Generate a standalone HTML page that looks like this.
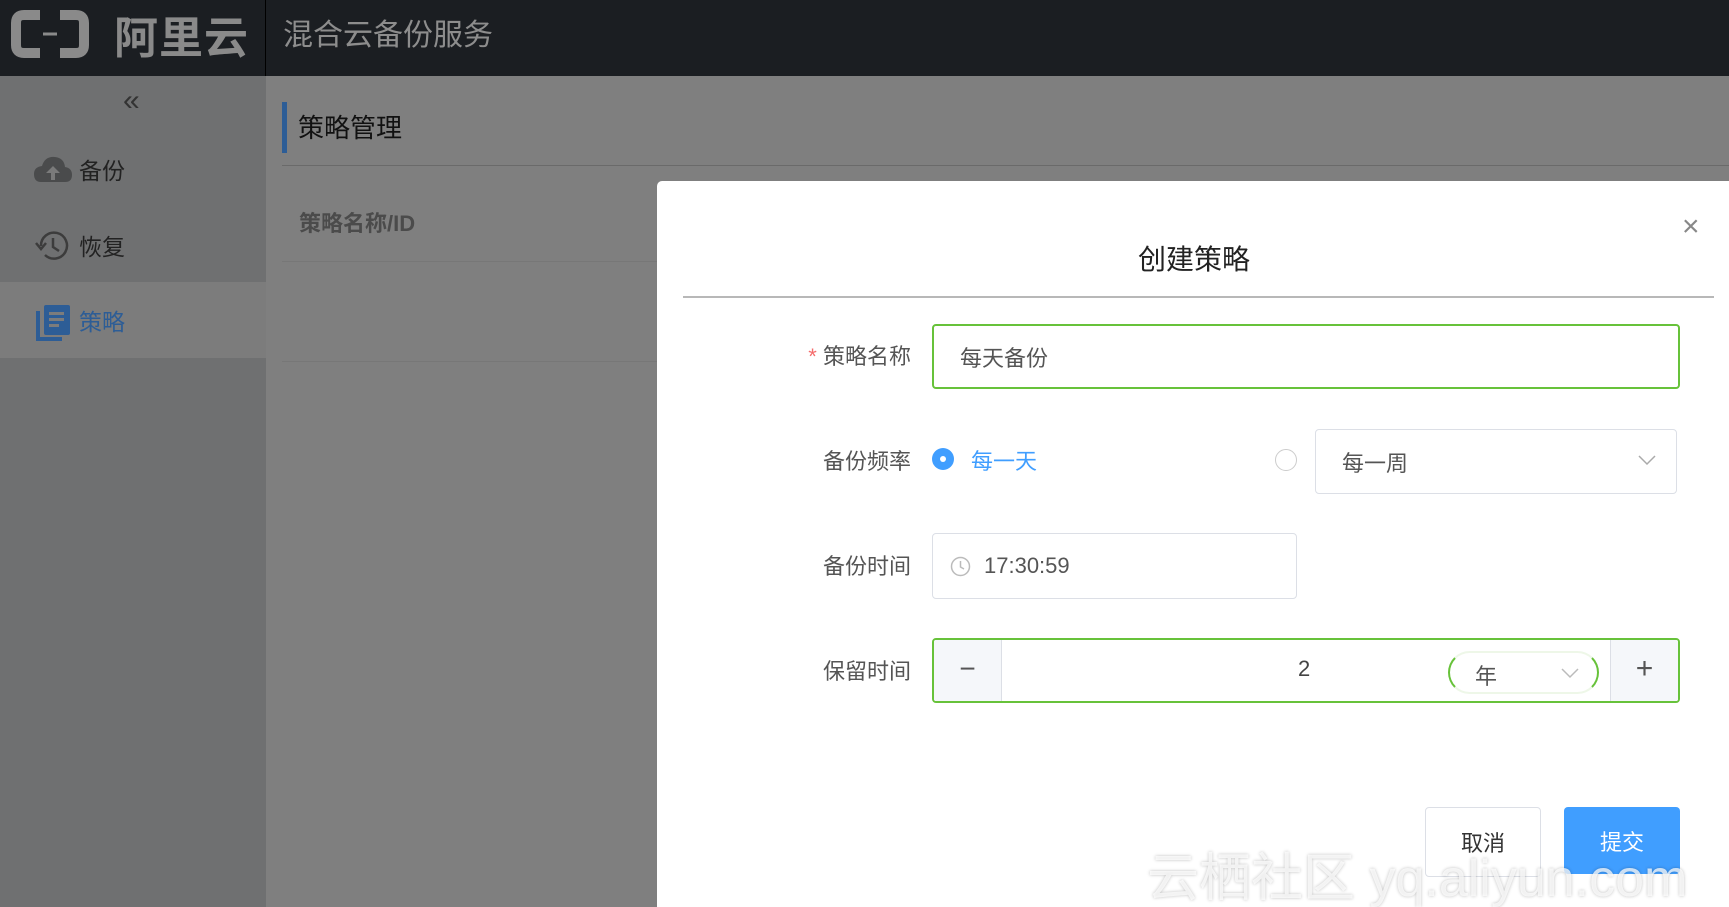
<!DOCTYPE html><html><head><meta charset="utf-8"><style>
*{box-sizing:border-box;margin:0;padding:0}
html{overflow:hidden;background:#7f7f7f}
body{width:1729px;height:907px;overflow:hidden;position:relative;background:#7f7f7f;font-family:"Liberation Sans","Noto Sans CJK SC",sans-serif}
.a{position:absolute}
</style></head><body>
<div class="a" style="left:0;top:0;width:1729px;height:76px;background:#1b1e22"></div>
<div class="a" style="left:265px;top:0;width:1px;height:76px;background:#000"></div>
<svg class="a" style="left:10px;top:9px" width="80" height="50" viewBox="0 0 80 50"><path d="M30 6H14Q6 6 6 14V36Q6 44 14 44H30M50 6H66Q74 6 74 14V36Q74 44 66 44H50" fill="none" stroke="#8a8a8a" stroke-width="10"/><path d="M33 25H47" stroke="#8a8a8a" stroke-width="3"/></svg>
<div class="a" style="left:114px;top:2px;font-size:44px;font-weight:bold;color:#8a8a8a;letter-spacing:1px">阿里云</div>
<div class="a" style="left:283px;top:10px;font-size:30px;color:#8d8d8d">混合云备份服务</div>
<div class="a" style="left:0;top:76px;width:266px;height:831px;background:#6f7071"></div>
<div class="a" style="left:0;top:282px;width:266px;height:76px;background:#7c7c7c"></div>
<div class="a" style="left:123px;top:84px;font-size:30px;color:#333">«</div>
<svg class="a" style="left:33px;top:154px" width="40" height="30" viewBox="0 0 40 30"><path d="M8 28Q1 28 1 20Q1 13 9 12Q12 2 22 3Q31 4 32 13Q39 14 39 21Q39 28 32 28Z" fill="#4a4b4c"/><path d="M20 12L13 19H18V26H22V19H27Z" fill="#7a7a7a"/></svg>
<div class="a" style="left:79px;top:152px;font-size:23px;color:#222">备份</div>
<svg class="a" style="left:35px;top:229px" width="36" height="34" viewBox="0 0 36 34"><path d="M6 17A13 13 0 1 1 10 26" fill="none" stroke="#3c3c3c" stroke-width="2.5"/><path d="M1 14L6 20L11 14" fill="none" stroke="#3c3c3c" stroke-width="2.5"/><path d="M18 9V18L24 22" fill="none" stroke="#3c3c3c" stroke-width="2.5"/></svg>
<div class="a" style="left:79px;top:228px;font-size:23px;color:#222">恢复</div>
<svg class="a" style="left:36px;top:305px" width="34" height="36" viewBox="0 0 34 36"><rect x="0" y="6" width="4" height="30" fill="#2d5d96"/><rect x="0" y="32" width="26" height="4" fill="#2d5d96"/><rect x="8" y="0" width="26" height="30" rx="2" fill="#2d5d96"/><rect x="13" y="7" width="15" height="3" fill="#7c7c7c"/><rect x="13" y="13" width="15" height="3" fill="#7c7c7c"/><rect x="13" y="19" width="10" height="3" fill="#7c7c7c"/></svg>
<div class="a" style="left:79px;top:303px;font-size:23px;color:#2d5d96">策略</div>
<div class="a" style="left:282px;top:102px;width:5px;height:51px;background:#2d5d96"></div>
<div class="a" style="left:298px;top:108px;font-size:26px;color:#111">策略管理</div>
<div class="a" style="left:282px;top:165px;width:1447px;height:1px;background:#6a6a6a"></div>
<div class="a" style="left:299px;top:206px;font-size:22px;color:#4b4b4b;font-weight:bold">策略名称/ID</div>
<div class="a" style="left:282px;top:261px;width:400px;height:1px;background:#777"></div>
<div class="a" style="left:282px;top:361px;width:400px;height:1px;background:#777"></div>
<div class="a" style="left:657px;top:181px;width:1072px;height:726px;background:#fff;border-radius:5px 0 0 0"></div>
<div class="a" style="left:1138px;top:238px;font-size:28px;color:#222">创建策略</div>
<div class="a" style="left:1682px;top:212px;font-size:30px;color:#888;line-height:30px">×</div>
<div class="a" style="left:683px;top:296px;width:1031px;height:2px;background:#b8b8b8"></div>
<div class="a" style="left:700px;top:339px;width:211px;text-align:right;font-size:22px;color:#555"><span style="color:#f56c6c">* </span>策略名称</div>
<div class="a" style="left:932px;top:324px;width:748px;height:65px;border:2px solid #67c23a;border-radius:4px;font-size:22px;color:#555;padding:15px 0 0 26px">每天备份</div>
<div class="a" style="left:700px;top:444px;width:211px;text-align:right;font-size:22px;color:#555">备份频率</div>
<div class="a" style="left:932px;top:448px;width:22px;height:22px;border-radius:50%;background:#409eff"><div class="a" style="left:8px;top:8px;width:6px;height:6px;border-radius:50%;background:#fff"></div></div>
<div class="a" style="left:971px;top:444px;font-size:22px;color:#409eff">每一天</div>
<div class="a" style="left:1275px;top:449px;width:22px;height:22px;border-radius:50%;border:1px solid #ccc"></div>
<div class="a" style="left:1315px;top:429px;width:362px;height:65px;border:1px solid #dcdfe6;border-radius:4px;font-size:22px;color:#555;padding:16px 0 0 26px">每一周</div>
<svg class="a" style="left:1637px;top:453px" width="20" height="14"><path d="M2 3L10 11L18 3" fill="none" stroke="#aaa" stroke-width="1.5"/></svg>
<div class="a" style="left:700px;top:549px;width:211px;text-align:right;font-size:22px;color:#555">备份时间</div>
<div class="a" style="left:932px;top:533px;width:365px;height:66px;border:1px solid #dcdfe6;border-radius:4px;font-size:22px;color:#555;padding:19px 0 0 51px">17:30:59</div>
<svg class="a" style="left:950px;top:556px" width="21" height="21"><circle cx="10.5" cy="10.5" r="9" fill="none" stroke="#bbb" stroke-width="1.5"/><path d="M10.5 5V11L14 13" fill="none" stroke="#bbb" stroke-width="1.5"/></svg>
<div class="a" style="left:700px;top:654px;width:211px;text-align:right;font-size:22px;color:#555">保留时间</div>
<div class="a" style="left:932px;top:638px;width:748px;height:65px;border:2px solid #67c23a;border-radius:4px;overflow:hidden">
<div class="a" style="left:0;top:0;width:68px;height:61px;background:#f5f7fa;border-right:1px solid #dcdfe6;text-align:center;font-size:28px;color:#555;line-height:58px">−</div>
<div class="a" style="right:0;top:0;width:68px;height:61px;background:#f5f7fa;border-left:1px solid #dcdfe6;text-align:center;font-size:30px;color:#555;line-height:58px">+</div>
<div class="a" style="left:364px;top:16px;font-size:22px;color:#444">2</div>
<div class="a" style="left:514px;top:11px;width:151px;height:43px;border:2px solid #67c23a;border-top-color:#eef7e8;border-bottom-color:#eef7e8;border-radius:22px;font-size:22px;color:#555;padding:6px 0 0 25px">年</div>
<svg class="a" style="left:626px;top:26px" width="20" height="14"><path d="M2 3L10 11L18 3" fill="none" stroke="#bbb" stroke-width="1.5"/></svg>
</div>
<div class="a" style="left:1425px;top:807px;width:116px;height:70px;border:1px solid #dcdfe6;border-radius:4px;font-size:22px;color:#333;text-align:center;padding-top:18px">取消</div>
<div class="a" style="left:1564px;top:807px;width:116px;height:67px;background:#409eff;border-radius:4px;font-size:22px;color:#fff;text-align:center;padding-top:18px">提交</div>
<div class="a" style="left:1147px;top:836px;font-size:52px;color:rgba(255,255,255,.75);text-shadow:0 0 3px rgba(0,0,0,.25);white-space:nowrap">云栖社区 yq.aliyun.com</div>
</body></html>
